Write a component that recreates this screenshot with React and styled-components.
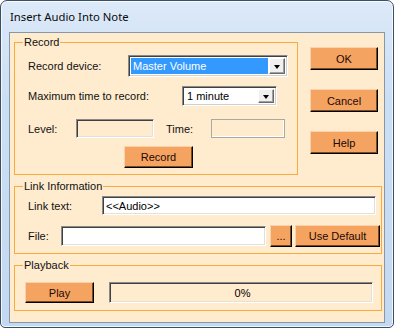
import styled, { createGlobalStyle } from 'styled-components';

const GlobalStyle = createGlobalStyle`
  html, body { margin: 0; padding: 0; background: #fff; }
  body { font-family: "Liberation Sans", Arial, sans-serif; font-size: 11px; color: #000; }
  * { box-sizing: border-box; }
`;

const Window = styled.div`
  width: 394px;
  height: 328px;
  border: 1px solid #3c4e62;
  border-radius: 7px 7px 5px 5px;
  background: linear-gradient(180deg, #dce9f8 0%, #cbdff4 30%, #c3d9f1 100%);
  box-shadow: inset 0 0 0 1px rgba(255, 255, 255, 0.75);
  display: flex;
  flex-direction: column;
  padding: 0 8px 4px;
`;

const TitleBar = styled.div`
  height: 31px;
  display: flex;
  align-items: center;
  padding-left: 1px;
  padding-bottom: 1px;
  font-family: "Noto Sans", "Open Sans", sans-serif;
  font-size: 11.3px;
  color: #0b0b0b;
`;

const Client = styled.div`
  height: 291px;
  border: 1px solid #8797a8;
  background: #ffebcd;
  padding: 9px 2px 11px 4px;
  display: flex;
  flex-direction: column;
  gap: 11px;
`;

const TopRow = styled.div`
  display: flex;
  align-items: flex-start;
`;

const Group = styled.div`
  position: relative;
  width: ${p => p.$w}px;
  border: 1px solid #f9aa3c;
  padding: ${p => p.$pad};
`;

const Legend = styled.span`
  position: absolute;
  top: -7px;
  left: 8px;
  padding: 0 1px;
  line-height: 13px;
  background: #ffebcd;
  color: #111;
`;

const Row = styled.div`
  display: flex;
  align-items: center;
  height: ${p => p.$h}px;
  margin-top: ${p => p.$mt || 0}px;
`;

const Label = styled.span`
  flex-shrink: 0;
  width: ${p => p.$w}px;
  margin-left: ${p => p.$ml || 0}px;
  color: #111;
  white-space: nowrap;
`;

const Select = styled.div`
  display: flex;
  flex-shrink: 0;
  width: ${p => p.$w}px;
  height: 100%;
  padding: 2px;
  background: #fff;
  border: 1px solid;
  border-color: #8a8a8a #fff #fff #8a8a8a;
  box-shadow: inset 1px 1px #404040, inset -1px -1px #d4d0c8;
`;

const SelectValue = styled.div`
  flex: 1;
  display: flex;
  align-items: center;
  padding-left: 2px;
  margin-right: 1px;
  background: ${p => (p.$active ? '#3399ff' : 'transparent')};
  color: ${p => (p.$active ? '#fff' : '#000')};
`;

const DropButton = styled.div`
  width: 16px;
  display: flex;
  align-items: center;
  justify-content: center;
  background: #f0f0f0;
  border: 1px solid;
  border-color: #fff #696969 #696969 #fff;
  box-shadow: inset -1px -1px #a0a0a0;
`;

const Arrow = styled.span`
  width: 0;
  height: 0;
  border-left: 3.5px solid transparent;
  border-right: 3.5px solid transparent;
  border-top: 4px solid #000;
  margin-top: 1px;
`;

const Field = styled.div`
  flex-shrink: 0;
  width: ${p => p.$w}px;
  height: ${p => p.$h}px;
  margin-left: ${p => p.$ml || 0}px;
  display: flex;
  align-items: center;
  justify-content: ${p => (p.$center ? 'center' : 'flex-start')};
  padding-left: 3px;
  background: ${p => (p.$white ? '#fff' : 'transparent')};
  border: 1px solid;
  border-color: #8a8a8a #fff #fff #8a8a8a;
  box-shadow: inset 1px 1px #404040, inset -1px -1px #e4e0d8;
  color: #000;
`;

const DimField = styled(Field)`
  border-color: #aca8a2;
  box-shadow: inset -1px -1px #fff;
`;

const Button = styled.button`
  width: ${p => p.$w}px;
  height: ${p => p.$h || 23}px;
  margin-left: ${p => p.$ml || 0}px;
  margin-top: ${p => p.$mt || 0}px;
  padding: 0;
  flex-shrink: 0;
  font-family: "Liberation Sans", Arial, sans-serif;
  font-size: 11px;
  color: #1e0808;
  background: #f4a460;
  border: 1px solid;
  border-color: #fbd1ab #000 #000 #fbd1ab;
  box-shadow: inset -1px -1px #7a4a20;
`;

const ButtonColumn = styled.div`
  display: flex;
  flex-direction: column;
  margin-left: 12px;
  padding-top: 5px;
  gap: 19px;
`;

const App = () => {
  return (
    <>
      <GlobalStyle />
      <Window>
        <TitleBar>Insert Audio Into Note</TitleBar>
        <Client>
          <TopRow>
            <Group $w={284} $pad="12px 0 6px 13px">
              <Legend>Record</Legend>
              <Row $h={22}>
                <Label $w={100}>Record device:</Label>
                <Select $w={160}>
                  <SelectValue $active>Master Volume</SelectValue>
                  <DropButton><Arrow /></DropButton>
                </Select>
              </Row>
              <Row $h={20} $mt={9}>
                <Label $w={154}>Maximum time to record:</Label>
                <Select $w={95}>
                  <SelectValue>1 minute</SelectValue>
                  <DropButton><Arrow /></DropButton>
                </Select>
              </Row>
              <Row $h={19} $mt={13}>
                <Label $w={48}>Level:</Label>
                <Field $w={78} $h={19} />
                <Label $w={45} $ml={12}>Time:</Label>
                <DimField $w={74} $h={19} />
              </Row>
              <Button $w={69} $h={22} $ml={96} $mt={8}>Record</Button>
            </Group>
            <ButtonColumn>
              <Button $w={68}>OK</Button>
              <Button $w={68}>Cancel</Button>
              <Button $w={68}>Help</Button>
            </ButtonColumn>
          </TopRow>

          <Group $w={368} $pad="9px 0 6px 13px">
            <Legend>Link Information</Legend>
            <Row $h={19}>
              <Label $w={74}>Link text:</Label>
              <Field $w={274} $h={19} $white>&lt;&lt;Audio&gt;&gt;</Field>
            </Row>
            <Row $h={22} $mt={10}>
              <Label $w={33}>File:</Label>
              <Field $w={205} $h={20} $white />
              <Button $w={22} $h={22} $ml={4}>...</Button>
              <Button $w={85} $h={22} $ml={3}>Use Default</Button>
            </Row>
          </Group>

          <Group $w={368} $pad="16px 0 7px 10px">
            <Legend>Playback</Legend>
            <Row $h={21}>
              <Button $w={69} $h={21}>Play</Button>
              <Field $w={264} $h={21} $ml={15} $center>0%</Field>
            </Row>
          </Group>
        </Client>
      </Window>
    </>
  );
};

export default App;
